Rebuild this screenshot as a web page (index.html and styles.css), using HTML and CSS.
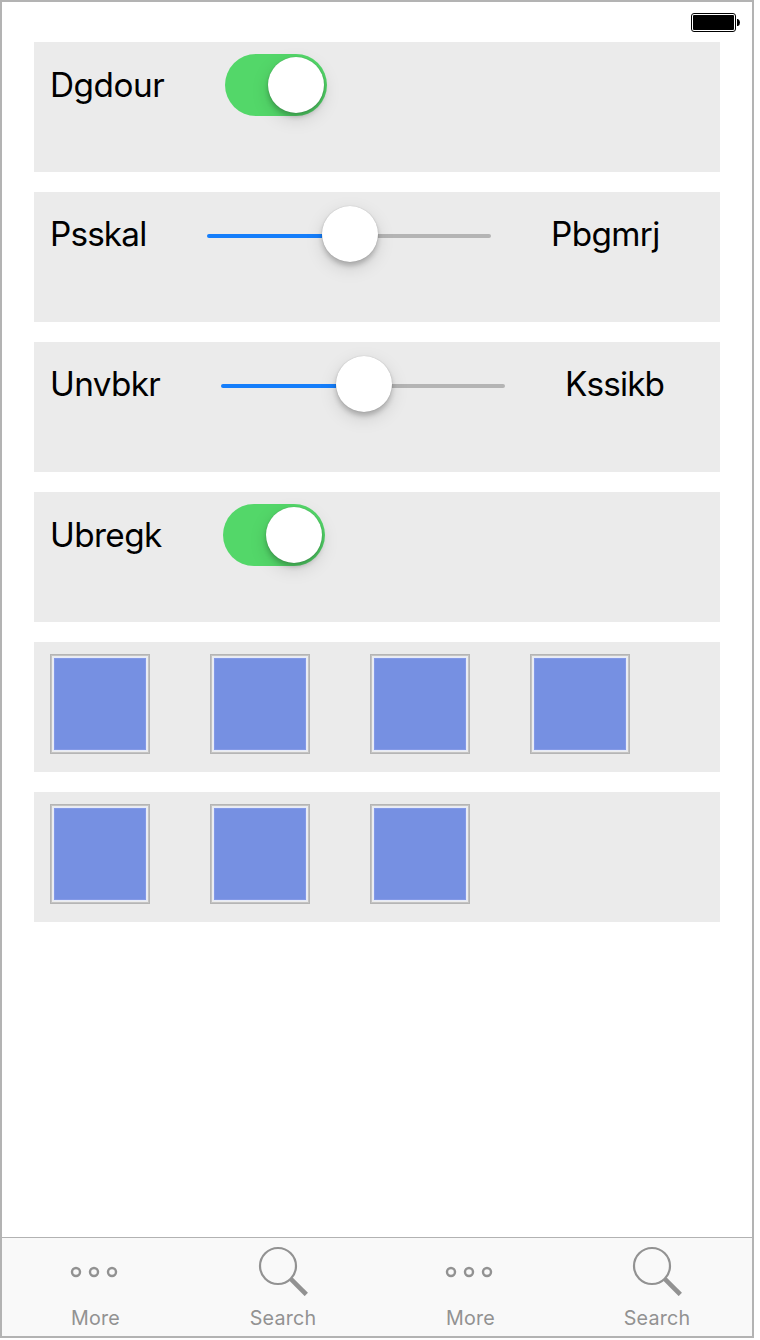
FILE: index.html
```html
<!DOCTYPE html>
<html lang="en">
<head>
<meta charset="utf-8">
<title>Settings</title>
<link rel="stylesheet" href="styles.css">
</head>
<body>
<div class="phone">
  <header class="status">
    <svg class="battery" width="50" height="20" viewBox="0 0 50 20">
      <rect x="0.5" y="0.5" width="44" height="18" rx="2.5" fill="#fff" stroke="#000"/>
      <rect x="2" y="2" width="41" height="15" rx="1" fill="#000"/>
      <path d="M46 6h1q2 1 2 3.5t-2 3.5h-1z" fill="#000"/>
    </svg>
  </header>
  <main class="rows">
    <section class="row">
      <span class="label w-dgdour">Dgdour</span>
      <span class="switch"><span class="knob"></span></span>
    </section>
    <section class="row">
      <span class="label raised w-psskal">Psskal</span>
      <span class="slider"><span class="fill"></span><span class="knob"></span><span class="rest"></span></span>
      <span class="label raised w-pbgmrj">Pbgmrj</span>
    </section>
    <section class="row">
      <span class="label raised w-unvbkr">Unvbkr</span>
      <span class="slider"><span class="fill"></span><span class="knob"></span><span class="rest"></span></span>
      <span class="label raised w-kssikb">Kssikb</span>
    </section>
    <section class="row">
      <span class="label w-ubregk">Ubregk</span>
      <span class="switch"><span class="knob"></span></span>
    </section>
    <section class="row">
      <span class="tile"></span><span class="tile"></span><span class="tile"></span><span class="tile"></span>
    </section>
    <section class="row">
      <span class="tile"></span><span class="tile"></span><span class="tile"></span>
    </section>
  </main>
  <nav class="tabs">
    <div class="tab">
      <svg class="icon" width="50" height="52" viewBox="0 0 50 52"><g fill="none" stroke="#929292" stroke-width="2.4"><circle cx="6" cy="28" r="4"/><circle cx="24" cy="28" r="4"/><circle cx="42" cy="28" r="4"/></g></svg>
      <span class="caption">More</span>
    </div>
    <div class="tab">
      <svg class="icon" width="50" height="52" viewBox="0 0 50 52"><g fill="none" stroke="#929292"><circle cx="20" cy="22" r="18" stroke-width="2.2"/><path d="M33 35.2L48.3 50.5" stroke-width="4.6"/></g></svg>
      <span class="caption">Search</span>
    </div>
    <div class="tab">
      <svg class="icon" width="50" height="52" viewBox="0 0 50 52"><g fill="none" stroke="#929292" stroke-width="2.4"><circle cx="6" cy="28" r="4"/><circle cx="24" cy="28" r="4"/><circle cx="42" cy="28" r="4"/></g></svg>
      <span class="caption">More</span>
    </div>
    <div class="tab">
      <svg class="icon" width="50" height="52" viewBox="0 0 50 52"><g fill="none" stroke="#929292"><circle cx="20" cy="22" r="18" stroke-width="2.2"/><path d="M33 35.2L48.3 50.5" stroke-width="4.6"/></g></svg>
      <span class="caption">Search</span>
    </div>
  </nav>
</div>
</body>
</html>
```
FILE: styles.css
```css
* { box-sizing: border-box; }
body { margin: 0; background: #fff; font-family: Inter, "Liberation Sans", sans-serif; }
.phone { width: 754px; height: 1338px; border: 2px solid #b3b3b3; display: flex; flex-direction: column; }
.status { height: 40px; padding: 11px 11px 0 0; display: flex; justify-content: flex-end; }
.battery { display: block; }
.rows { flex: 1; padding: 0 32px; display: flex; flex-direction: column; gap: 20px; }
.row { height: 130px; padding: 12px 16px; background: #ebebeb; display: flex; gap: 60px; align-items: flex-start; }
.label { height: 62px; line-height: 62px; font-size: 33.3px; color: #000; white-space: nowrap; flex: none; }
.raised { line-height: 60px; }
.w-dgdour { width: 115px; letter-spacing: -0.45px; }
.w-psskal { width: 97px; letter-spacing: -0.85px; }
.w-pbgmrj { width: 110px; letter-spacing: -0.6px; }
.w-unvbkr { width: 111px; letter-spacing: -0.65px; }
.w-kssikb { width: 100px; letter-spacing: -0.85px; }
.w-ubregk { width: 113px; letter-spacing: -0.6px; }
.knob { width: 56px; height: 56px; border-radius: 50%; background: #fff; flex: none; box-shadow: 0 0 1px rgba(0,0,0,.25), 0 4px 5px rgba(0,0,0,.2), 0 6px 18px rgba(0,0,0,.13); }
.switch { width: 102px; height: 62px; padding: 3px; border-radius: 31px; background: #53d769; display: flex; justify-content: flex-end; flex: none; }
.slider { width: 284px; height: 60px; display: flex; align-items: center; flex: none; }
.fill, .rest { height: 4px; margin-top: 4px; }
.fill { width: 115px; background: #157efb; border-radius: 2px 0 0 2px; }
.rest { flex: 1; background: #b4b4b4; border-radius: 0 2px 2px 0; }
.slider .knob { z-index: 1; }
.tile { width: 100px; height: 100px; border: 1px solid #b5b5b5; background: #7690e2; flex: none; box-shadow: inset 0 0 0 1px #c3c3c3, inset 0 0 0 2px #ececec, inset 0 0 0 3px #e6ebfa, inset 0 0 0 4px #8499e6; }
.tabs { height: 99px; border-top: 1px solid #b2b2b2; background: #f9f9f9; display: grid; grid-template-columns: 187px 188px 187px 186px; }
.tab { display: flex; flex-direction: column; align-items: center; padding-top: 6px; }
.tab:nth-child(odd) .icon { margin-left: -1px; }
.icon { display: block; }
.caption { margin-top: 10px; font-size: 19.7px; line-height: 24px; color: #929292; letter-spacing: 0.2px; }
```
